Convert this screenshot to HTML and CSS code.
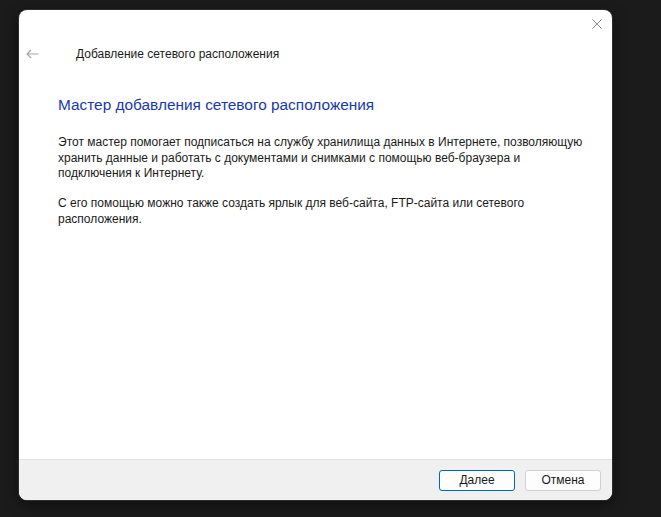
FILE: index.html
```html
<!DOCTYPE html>
<html lang="ru">
<head>
    <meta charset="UTF-8">
    <title>Добавление сетевого расположения</title>
    <link rel="stylesheet" href="styles.css">
</head>
<body>
    <div class="window">
        <div class="titlebar">
            <button class="close" aria-label="Закрыть">
                <svg width="10" height="10" viewBox="0 0 10 10">
                    <path d="M0.5 0.5 L9.5 9.5 M9.5 0.5 L0.5 9.5" stroke="#8a8a8a" stroke-width="1" fill="none"/>
                </svg>
            </button>
        </div>
        <div class="nav">
            <span class="back">
                <svg width="13" height="10" viewBox="0 0 13 10">
                    <path d="M12.5 5 H1 M5 1 L1 5 L5 9" stroke="#a6a6a6" stroke-width="1.2" fill="none"/>
                </svg>
            </span>
            <span class="nav-title">Добавление сетевого расположения</span>
        </div>
        <div class="content">
            <h1>Мастер добавления сетевого расположения</h1>
            <p>Этот мастер помогает подписаться на службу хранилища данных в Интернете, позволяющую<br>
               хранить данные и работать с документами и снимками с помощью веб-браузера и<br>
               подключения к Интернету.</p>
            <p>С его помощью можно также создать ярлык для веб-сайта, FTP-сайта или сетевого<br>
               расположения.</p>
        </div>
        <div class="footer">
            <button class="btn default">Далее</button>
            <button class="btn">Отмена</button>
        </div>
    </div>
</body>
</html>
```
FILE: styles.css
```css
body {
    margin: 0;
    background-color: #1b1b1b;
    font-family: 'Liberation Sans', Arial, sans-serif;
    height: 517px;
    overflow: hidden;
}

.window {
    margin: 10px 0 0 19px;
    width: 593px;
    height: 490px;
    background-color: #ffffff;
    border-radius: 8px;
    display: flex;
    flex-direction: column;
    overflow: hidden;
    box-shadow: 0 0 0 1px #2e2e2e, 0 4px 14px rgba(0, 0, 0, 0.5);
}

.titlebar {
    height: 28px;
    display: flex;
    justify-content: flex-end;
}

.close {
    width: 30px;
    height: 28px;
    border: none;
    background: none;
    padding: 0;
    display: flex;
    align-items: center;
    justify-content: center;
}

.nav {
    height: 32px;
    display: flex;
    align-items: center;
}

.back {
    width: 57px;
    display: flex;
    padding-left: 7px;
    box-sizing: border-box;
}

.nav-title {
    font-size: 12px;
    color: #1a1a1a;
}

.content {
    flex: 1;
    padding: 24px 8px 0 39px;
}

h1 {
    margin: 0 0 19px;
    font-size: 15.4px;
    font-weight: normal;
    color: #1739ad;
    line-height: 22px;
}

p {
    margin: 0 0 14.5px;
    font-size: 12px;
    line-height: 15.5px;
    color: #1a1a1a;
    white-space: nowrap;
}

.footer {
    height: 40px;
    background-color: #f0f0f0;
    border-top: 1px solid #dfdfdf;
    display: flex;
    align-items: center;
    justify-content: flex-end;
    gap: 10px;
    padding-right: 11px;
}

.btn {
    width: 76px;
    height: 21px;
    font-family: inherit;
    font-size: 12px;
    color: #1a1a1a;
    background-color: #fdfdfd;
    border: 1px solid #d0d0d0;
    border-radius: 3px;
    padding: 0;
}

.btn.default {
    border-color: #0067c0;
}
```
